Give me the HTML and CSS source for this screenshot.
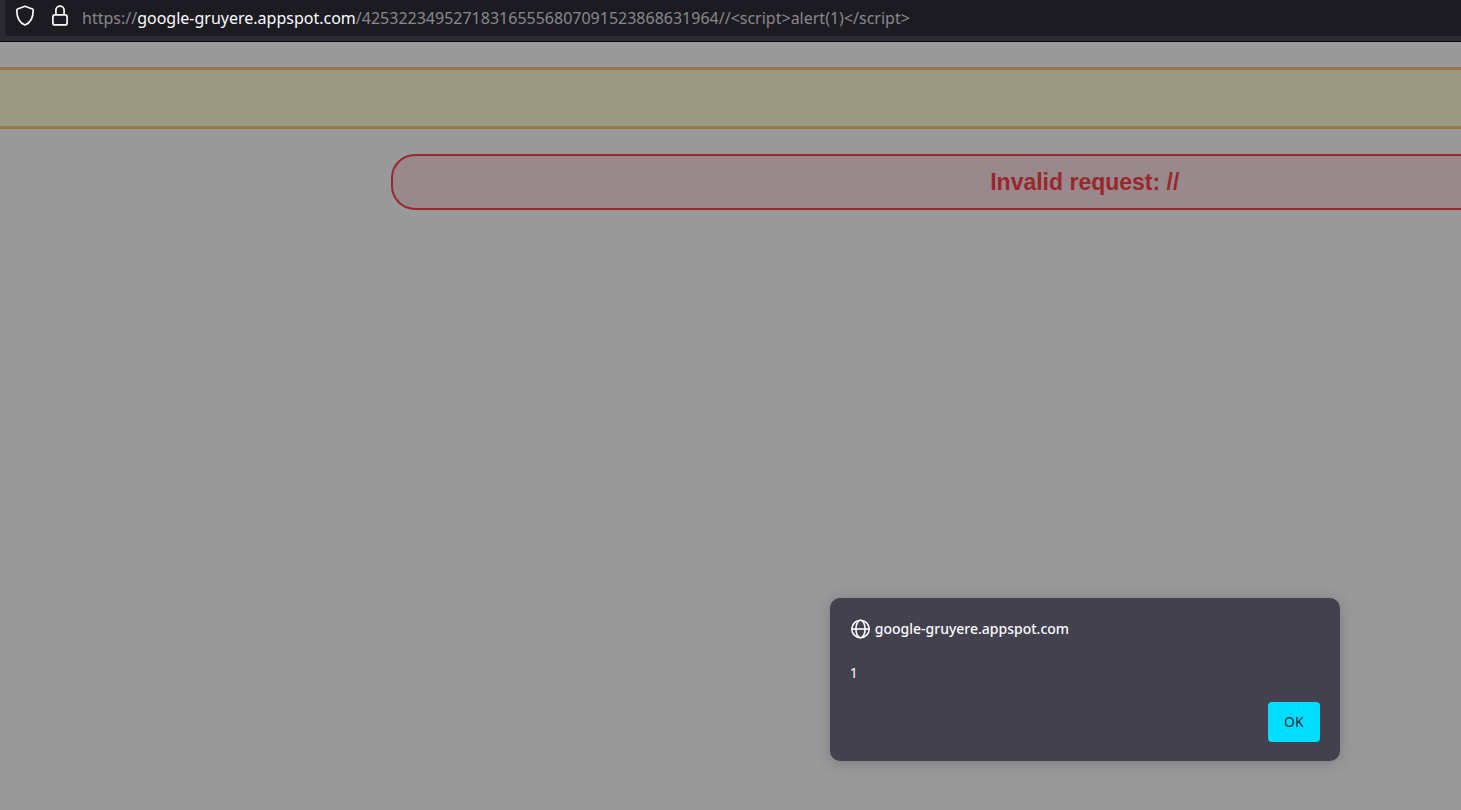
FILE: index.html
```html
<!DOCTYPE html>
<html lang="en">
<head>
<meta charset="utf-8">
<title>google-gruyere.appspot.com</title>
<link rel="stylesheet" href="styles.css">
</head>
<body>
<header class="toolbar">
  <div class="urlbar">
    <button class="urlbar-button" type="button" aria-label="Tracking protection">
      <svg width="20" height="22" viewBox="0 0 20 22" fill="none" stroke="currentColor" stroke-width="1.7" stroke-linejoin="round"><path d="M10 1.2 L17.4 4 Q18.2 4.3 18.2 5.2 C18.2 12 16.6 17.4 10 20 C3.4 17.4 1.8 12 1.8 5.2 Q1.8 4.3 2.6 4 Z"/></svg>
    </button>
    <button class="urlbar-button" type="button" aria-label="Site information">
      <svg width="20" height="22" viewBox="0 0 20 22" fill="none" stroke="currentColor" stroke-width="1.7"><rect x="2.9" y="9.9" width="14.2" height="10" rx="2"/><path d="M5.9 9.9V5.2a4.1 4.1 0 0 1 8.2 0V9.9"/></svg>
    </button>
    <div class="url" role="textbox" aria-label="Address" contenteditable="true" spellcheck="false">https://<span class="url-host">google-gruyere.appspot.com</span>/425322349527183165556807091523868631964//&lt;script&gt;alert(1)&lt;/script&gt;</div>
  </div>
</header>
<main class="viewport">
  <div class="page">
    <div class="menu"></div>
    <div class="message">Invalid request: //</div>
    <section class="dialog" role="alertdialog" aria-labelledby="dialog-title" aria-describedby="dialog-text">
      <h1 class="dialog-title" id="dialog-title">
        <svg width="20" height="20" viewBox="0 0 20 20" fill="none" stroke="currentColor" stroke-width="1.6"><circle cx="10.5" cy="10" r="8.7"/><ellipse cx="10.5" cy="10" rx="4.6" ry="8.7"/><path d="M1.8 10h17.4"/></svg>
        <span>google-gruyere.appspot.com</span>
      </h1>
      <p class="dialog-text" id="dialog-text">1</p>
      <button class="dialog-ok" type="button">OK</button>
    </section>
  </div>
</main>
</body>
</html>
```
FILE: styles.css
```css
* {
  box-sizing: border-box;
}

body {
  display: flex;
  flex-direction: column;
  min-height: 100vh;
  margin: 0;
  background: #99999a;
  font-family: "Noto Sans", sans-serif;
}

.toolbar {
  padding: 0 0 5px 5px;
  background: #2b2a33;
  border-bottom: 1px solid #0c0c0d;
}

.urlbar {
  display: flex;
  align-items: center;
  height: 36px;
  padding: 0 0 4px 10px;
  background: #1c1b22;
  border-radius: 0 0 0 4px;
}

.urlbar-button {
  display: flex;
  margin-right: 15px;
  padding: 0;
  border: 0;
  background: none;
  color: #fbfbfe;
}

.url {
  flex: 1;
  margin-left: -3px;
  padding-top: 4px;
  color: #89888d;
  font-size: 16px;
  line-height: 24px;
  white-space: nowrap;
  outline: none;
}

.url-host {
  color: #fbfbfe;
}

.viewport {
  position: relative;
  display: flex;
  flex: 1;
  overflow: hidden;
}

.page {
  position: relative;
  flex: none;
  width: 148.5%;
  padding-top: 25px;
}

.menu {
  height: 62px;
  background: #999984;
  border: solid #99774d;
  border-width: 3px 0;
}

.message {
  margin: 25px 18%;
  padding: 12px;
  background: #99898c;
  border: 2px solid #99272b;
  border-radius: 24px;
  color: #99272b;
  font: bold 23px/28px "Liberation Sans", Arial, sans-serif;
  text-align: center;
}

.dialog {
  position: absolute;
  right: 0;
  bottom: 49px;
  left: 0;
  display: flex;
  flex-direction: column;
  width: 510px;
  margin: 0 auto;
  padding: 21px 20px 19px;
  background: #42414d;
  border-radius: 10px;
  box-shadow: 0 2px 14px rgba(58, 57, 68, 0.3);
  color: #fbfbfe;
  font-size: 14px;
  line-height: 20px;
}

.dialog-title {
  display: flex;
  gap: 5px;
  margin: 0 0 24px;
  font-size: 14px;
  font-weight: 500;
}

.dialog-text {
  margin: 0 0 19px;
}

.dialog-ok {
  align-self: flex-end;
  width: 52px;
  height: 40px;
  padding: 0;
  border: 0;
  border-radius: 4px;
  background: #00ddff;
  color: #2b2a33;
  font: 14px/20px "Noto Sans", sans-serif;
}
```
